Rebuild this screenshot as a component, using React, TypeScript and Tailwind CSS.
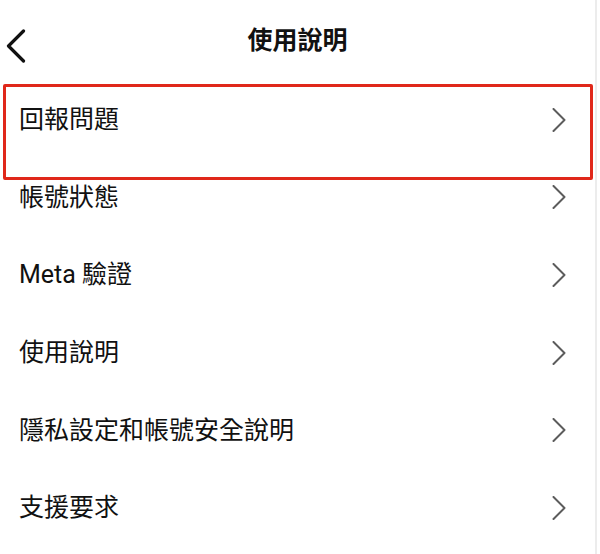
const items = ['回報問題', '帳號狀態', 'Meta 驗證', '使用說明', '隱私設定和帳號安全說明', '支援要求']

function BackIcon() {
  return (
    <svg width="22" height="34" viewBox="0 0 22 34" fill="none">
      <path d="M18.5 2 L3.5 17 L18.5 32" stroke="#111" strokeWidth="3.2" strokeLinecap="round" strokeLinejoin="round" />
    </svg>
  )
}

function RowChevron() {
  return (
    <svg width="14" height="24" viewBox="0 0 14 24" fill="none">
      <path d="M1.5 1 L12.5 12 L1.5 23" stroke="#5c5c5c" strokeWidth="2" strokeLinecap="round" strokeLinejoin="round" />
    </svg>
  )
}

export default function App() {
  return (
    <div
      className="relative w-[600px] h-[554px] bg-white overflow-hidden text-[#111]"
      style={{ fontFamily: '"Roboto", "Noto Sans CJK TC", sans-serif' }}
    >
      <div className="flex h-full w-[597px] flex-col border-r-2 border-[#ececec]">
        {/* header */}
        <div className="relative flex h-[81px] shrink-0 items-center justify-center">
          <button className="absolute left-[5px] top-[29px]">
            <BackIcon />
          </button>
          <h1 className="text-[25px] font-bold leading-none">使用說明</h1>
        </div>

        {/* list */}
        <ul className="flex flex-col">
          {items.map(label => (
            <li key={label} className="flex h-[77.6px] items-center justify-between pl-[19px] pr-[29px]">
              <span className="text-[25px] leading-none">{label}</span>
              <RowChevron />
            </li>
          ))}
        </ul>
      </div>

      {/* annotation box */}
      <div className="pointer-events-none absolute left-[3px] top-[84px] h-[96px] w-[590px] rounded-[2px] border-[3px] border-[#e0281a]" />
    </div>
  )
}
